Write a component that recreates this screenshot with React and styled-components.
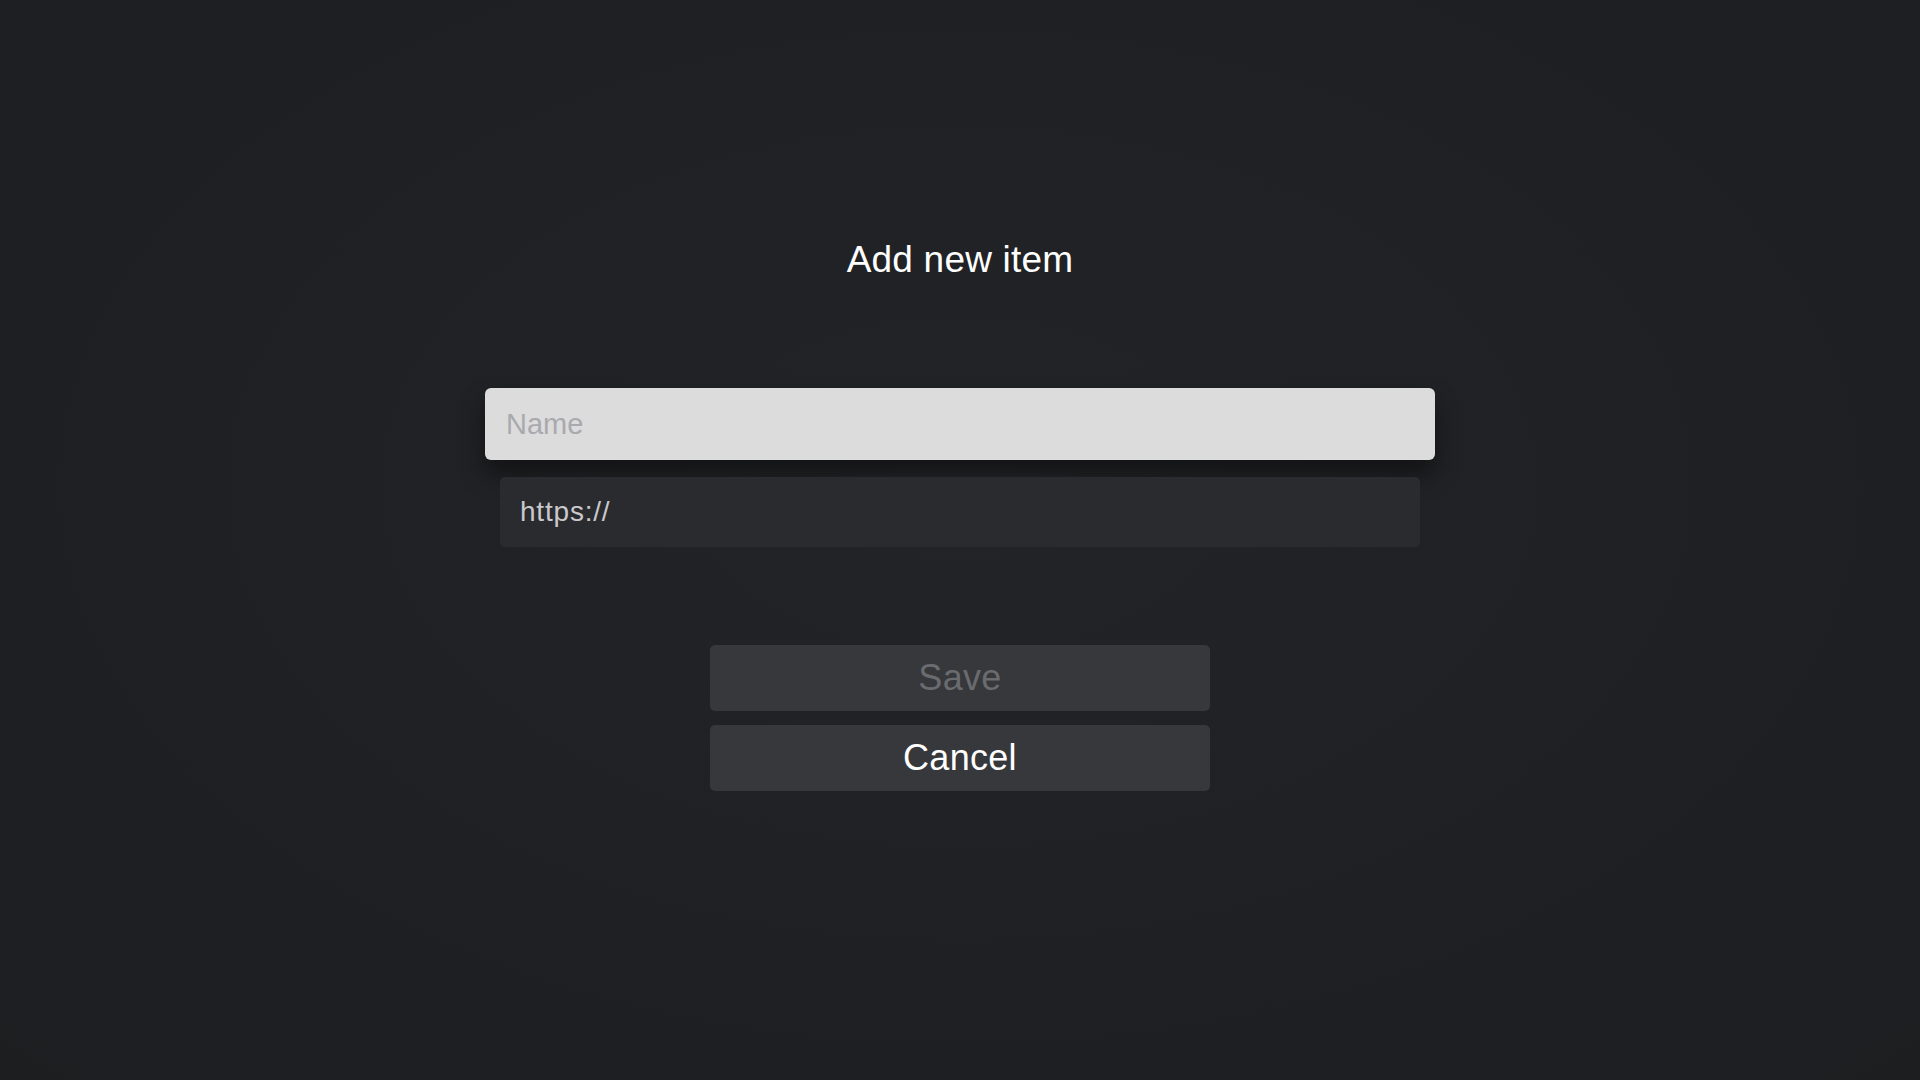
import React from 'react';
import styled, { createGlobalStyle } from 'styled-components';

const GlobalStyle = createGlobalStyle`
  html, body {
    margin: 0;
    padding: 0;
    height: 100%;
  }
  body {
    background: #1f2023;
    font-family: "Liberation Sans", Arial, sans-serif;
  }
`;

const Screen = styled.main`
  min-height: 1080px;
  box-sizing: border-box;
  padding-top: 238px;
  display: flex;
  flex-direction: column;
  align-items: center;
  background: radial-gradient(ellipse at 50% 45%, #232427 0%, #1f2023 60%, #1d1e20 100%);
`;

const Title = styled.h1`
  margin: 0;
  font-size: 37px;
  line-height: 44px;
  font-weight: 400;
  color: #ffffff;
  letter-spacing: 0.2px;
`;

const Form = styled.form`
  margin-top: 106px;
  display: flex;
  flex-direction: column;
  align-items: center;
`;

const Field = styled.input`
  box-sizing: border-box;
  border: none;
  outline: none;
  font-family: "Liberation Sans", Arial, sans-serif;
  width: ${({ $focused }) => ($focused ? '950px' : '920px')};
  height: ${({ $focused }) => ($focused ? '72px' : '70px')};
  padding: 0 0 0 ${({ $focused }) => ($focused ? '21px' : '20px')};
  font-size: ${({ $focused }) => ($focused ? '29px' : '28px')};
  letter-spacing: ${({ $focused }) => ($focused ? '0' : '0.8px')};
  border-radius: ${({ $focused }) => ($focused ? '6px' : '5px')};
  background: ${({ $focused }) => ($focused ? '#dcdcdc' : '#2a2b2e')};
  color: ${({ $focused }) => ($focused ? '#1c1c1e' : '#c9c9cd')};
  box-shadow: ${({ $focused }) => ($focused ? '0 14px 24px rgba(0, 0, 0, 0.45)' : 'none')};
  margin-bottom: ${({ $focused }) => ($focused ? '17px' : '0')};

  &::placeholder {
    color: #a9a9ae;
  }
`;

const Actions = styled.div`
  margin-top: 98px;
  display: flex;
  flex-direction: column;
  gap: 14px;
`;

const ActionButton = styled.button`
  width: 500px;
  height: 66px;
  border: none;
  border-radius: 5px;
  background: #37383b;
  font-family: "Liberation Sans", Arial, sans-serif;
  font-size: 36px;
  letter-spacing: 0.3px;
  color: ${({ $disabled }) => ($disabled ? '#6a6b6f' : '#ffffff')};
  cursor: ${({ $disabled }) => ($disabled ? 'default' : 'pointer')};
  padding: 0;
`;

export default function App() {
  return (
    <>
      <GlobalStyle />
      <Screen>
        <Title>Add new item</Title>
        <Form onSubmit={(e) => e.preventDefault()}>
          <Field $focused placeholder="Name" />
          <Field defaultValue="https://" />
        </Form>
        <Actions>
          <ActionButton $disabled type="button">Save</ActionButton>
          <ActionButton type="button">Cancel</ActionButton>
        </Actions>
      </Screen>
    </>
  );
}
